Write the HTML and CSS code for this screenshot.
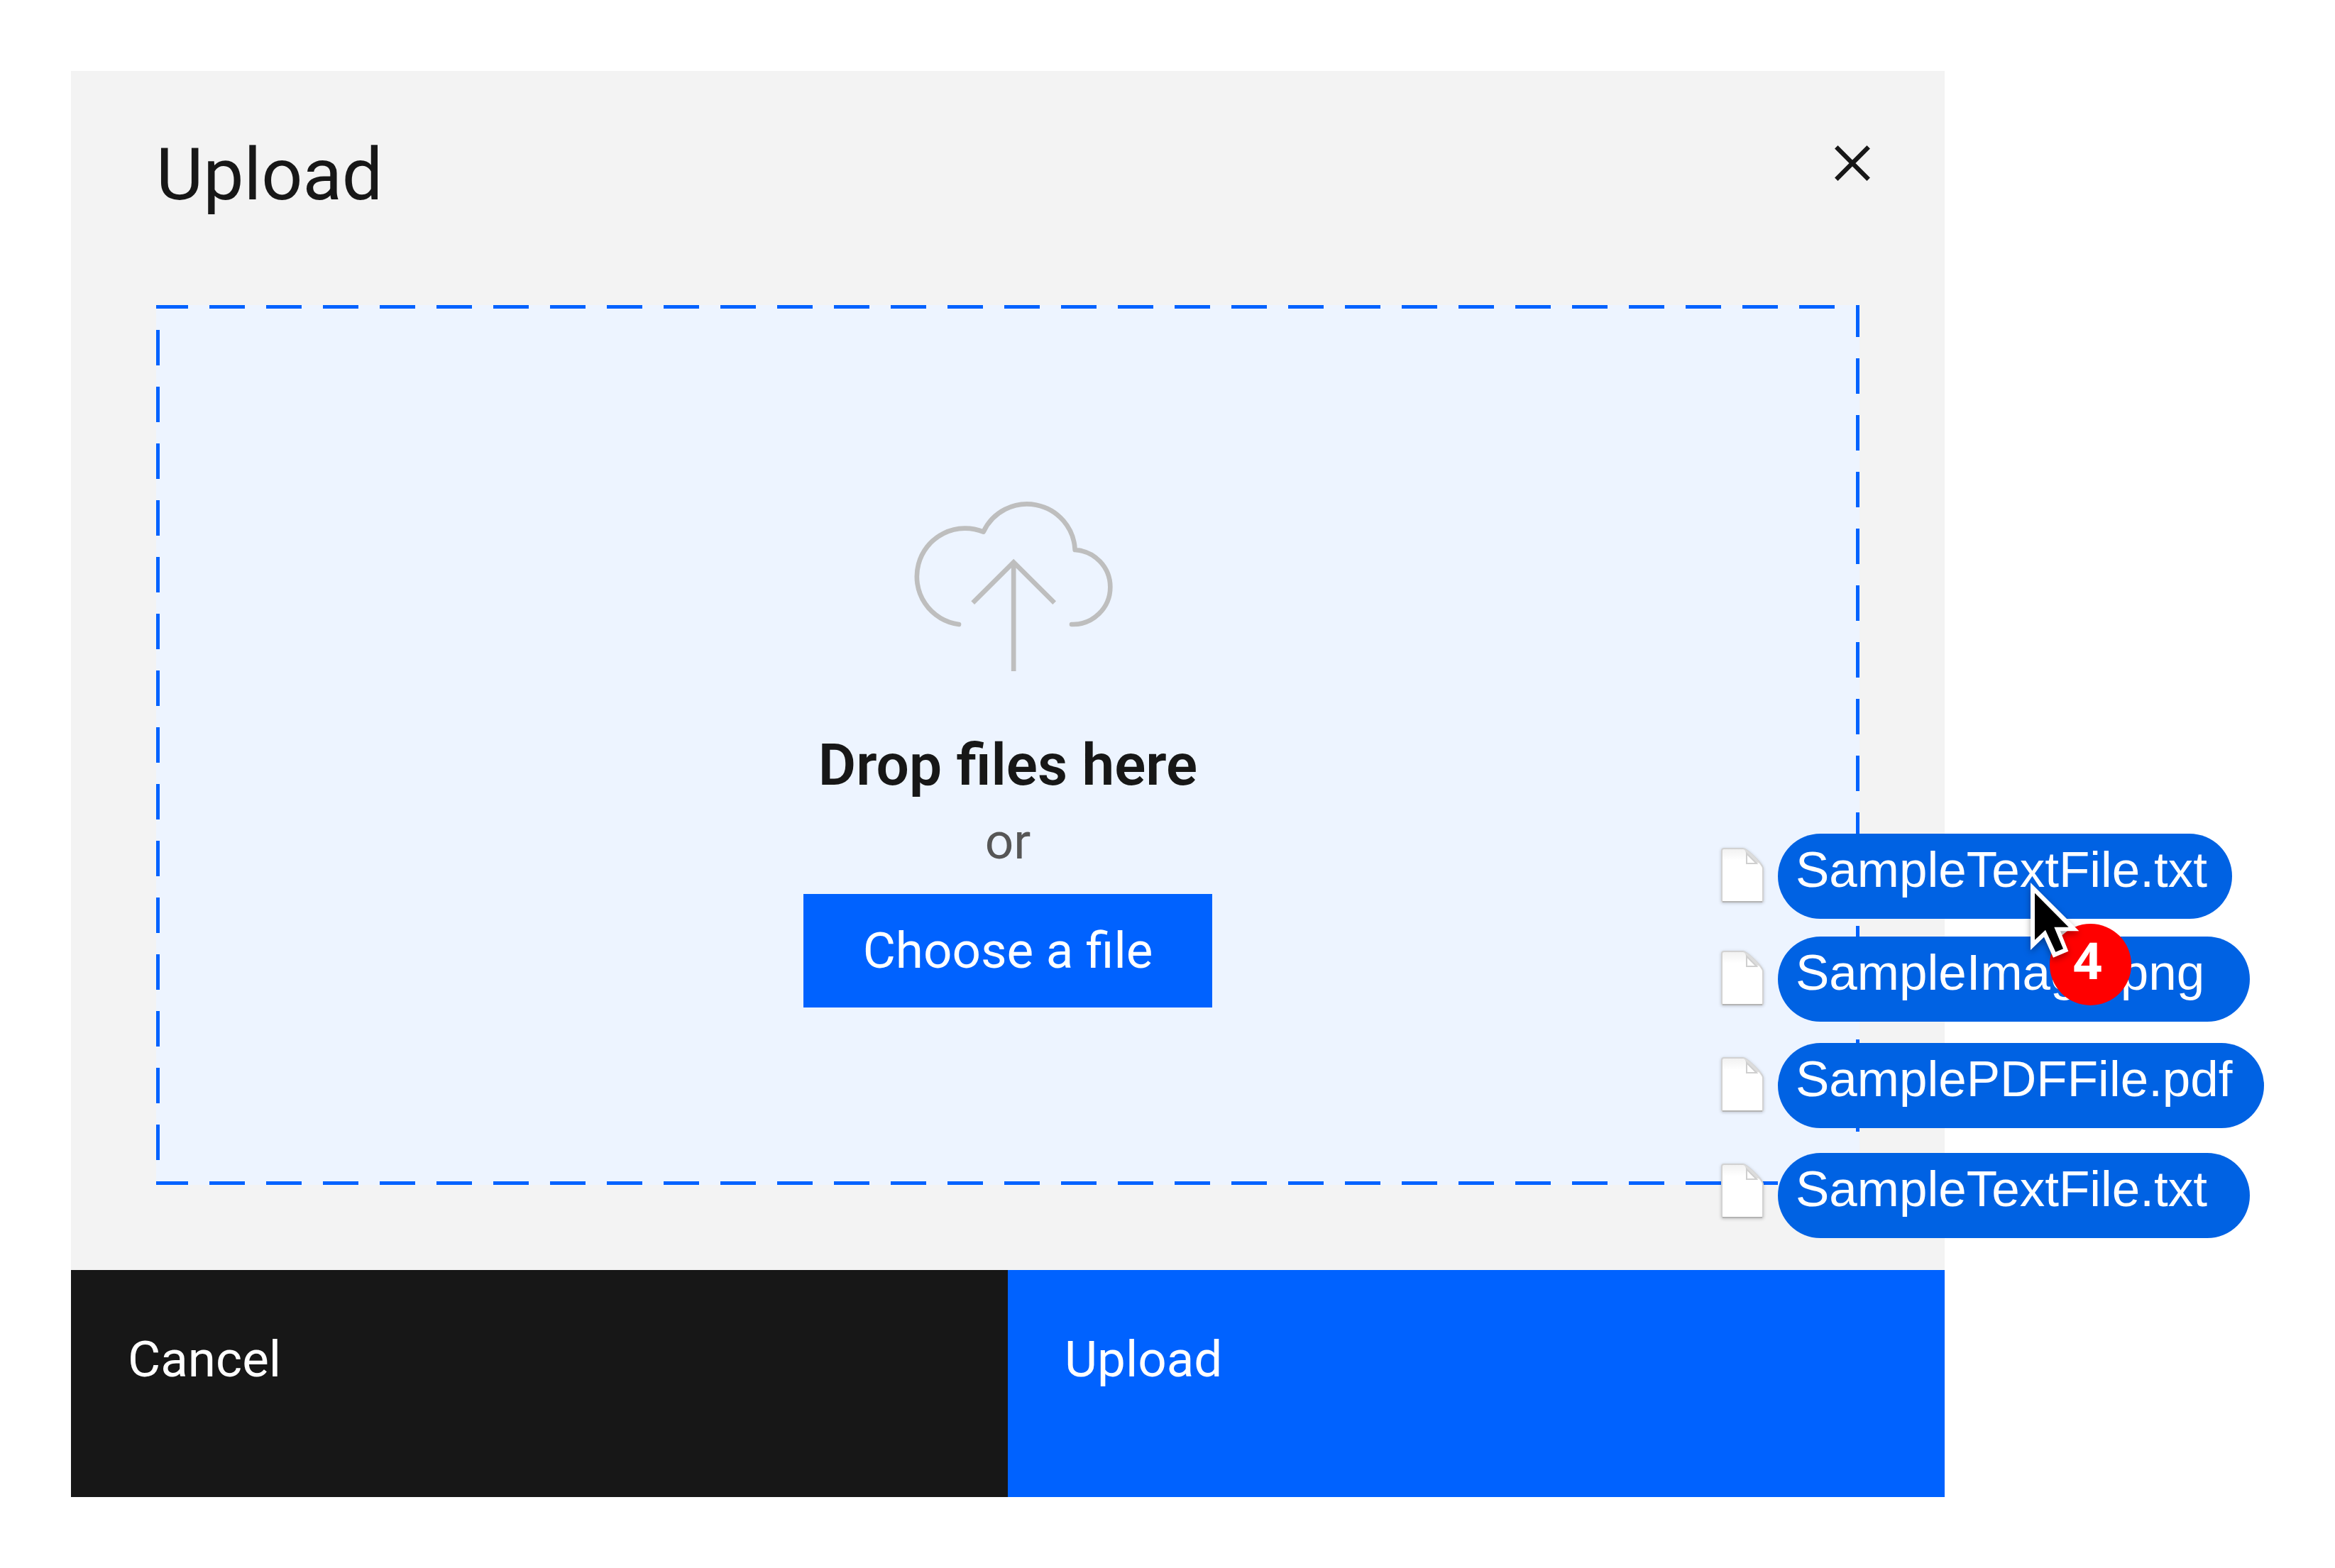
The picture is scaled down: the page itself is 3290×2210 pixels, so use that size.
FILE: index.html
```html
<!DOCTYPE html>
<html lang="en">
<head>
  <meta charset="utf-8">
  <meta name="viewport" content="width=device-width, initial-scale=1">
  <title>Upload</title>
  <link rel="stylesheet" href="styles.css">
</head>
<body>
  <svg class="sprite" aria-hidden="true">
    <defs>
      <linearGradient id="sheet-shade" x1="0" y1="0" x2="0" y2="1">
        <stop offset="0" stop-color="#f1f1f1"/>
        <stop offset="0.22" stop-color="#ffffff"/>
      </linearGradient>
      <symbol id="file" viewBox="0 0 70 90">
        <path d="M9 5H36C41 5 64 27 64 33V78Q64 80 62 80H8Q6 80 6 78V8Q6 5 9 5Z" fill="url(#sheet-shade)" stroke="#d2d2d2" stroke-width="2"/>
        <path d="M7 80H63" stroke="#b4b4b4" stroke-width="2"/>
        <path d="M36 5C40 8 41 12 41 25H57C61 26 63 29 64 33C63 25 42 5 36 5Z" fill="#dcdcdc"/>
        <path d="M41 12V26H55Z" fill="#ffffff" stroke="#cfcfcf" stroke-width="2"/>
      </symbol>
    </defs>
  </svg>

  <main class="stage">
    <section class="dialog" role="dialog" aria-labelledby="dialog-title">
      <header class="dialog-header">
        <h1 class="dialog-title" id="dialog-title">Upload</h1>
        <button class="close" type="button" aria-label="Close">
          <svg class="close-icon" viewBox="0 0 50 50" aria-hidden="true">
            <path d="M2.300 2.300L47.700 47.700M47.700 2.300L2.300 47.700" fill="none" stroke="currentColor" stroke-width="6.3"/>
          </svg>
        </button>
      </header>

      <div class="dropzone">
        <svg class="cloud" viewBox="88 72 906 735" aria-hidden="true">
          <g fill="none" stroke="currentColor" stroke-width="20">
            <path d="M334 600A204 204 0 1 1 438 209A203 203 0 0 1 825 285A158 158 0 0 1 974 442A158 158 0 0 1 811 600" stroke-linecap="round" stroke-linejoin="round"/>
            <path d="M393 509L565.500 337L738 509M565.500 337V798"/>
          </g>
        </svg>
        <h2 class="drop-title">Drop files here</h2>
        <p class="drop-or">or</p>
        <button class="choose" type="button">Choose a file</button>
      </div>

      <footer class="actions">
        <button class="action action-cancel" type="button">Cancel</button>
        <button class="action action-upload" type="button">Upload</button>
      </footer>
    </section>

    <div class="drag">
      <ul class="drag-list">
        <li class="drag-item">
          <svg class="file-icon" aria-hidden="true"><use href="#file"/></svg>
          <span class="pill pill-small">SampleTextFile.txt</span>
        </li>
        <li class="drag-item">
          <svg class="file-icon" aria-hidden="true"><use href="#file"/></svg>
          <span class="pill">SampleImage.png</span>
        </li>
        <li class="drag-item">
          <svg class="file-icon" aria-hidden="true"><use href="#file"/></svg>
          <span class="pill pill-large">SamplePDFFile.pdf</span>
        </li>
        <li class="drag-item">
          <svg class="file-icon" aria-hidden="true"><use href="#file"/></svg>
          <span class="pill">SampleTextFile.txt</span>
        </li>
      </ul>
      <span class="badge">4</span>
      <svg class="cursor" viewBox="183 283 210 321" aria-hidden="true">
        <path d="M183 283L388 488H309L343 573L279 600L240 513L183 568Z" fill="#ffffff"/>
        <path d="M201 327L344 471H283L321 563L289 576L246 483L201 525Z" fill="#000000"/>
      </svg>
    </div>
  </main>
</body>
</html>
```
FILE: styles.css
```css
:root {
  --blue: #0062ff;
  --ink: #171717;
  --ui: Roboto, "Noto Sans", sans-serif;
}

* {
  box-sizing: border-box;
}

body {
  margin: 0;
  background: #ffffff;
  color: var(--ink);
  font-family: var(--ui);
  font-size: 71px;
}

h1,
h2,
p,
ul {
  margin: 0;
  padding: 0;
}

button {
  border: 0;
  margin: 0;
  font: inherit;
  cursor: pointer;
}

.sprite {
  position: absolute;
  width: 0;
  height: 0;
}

.stage {
  position: relative;
  padding: 100px 550px 100px 100px;
}

.dialog {
  background: #f3f3f3;
}

/* Header */

.dialog-header {
  display: flex;
  justify-content: space-between;
  align-items: flex-start;
  padding: 86px 90px 124px 120px;
}

.dialog-title {
  font-size: 102px;
  font-weight: 400;
  line-height: 120px;
}

.close {
  display: grid;
  place-items: center;
  width: 80px;
  height: 88px;
  padding: 0;
  background: none;
  color: var(--ink);
}

.close-icon {
  width: 50px;
  height: 50px;
}

/* Drop area: one tiled dash strip on each side */

.dropzone {
  display: flex;
  flex-direction: column;
  align-items: center;
  margin: 0 120px;
  padding: 274px 80px 250px;
  background:
    linear-gradient(90deg, var(--blue) 50px, transparent 50px) -5px 0 / 80px 5px repeat-x,
    linear-gradient(90deg, var(--blue) 50px, transparent 50px) -5px 100% / 80px 5px repeat-x,
    linear-gradient(180deg, var(--blue) 50px, transparent 50px) 0 35px / 5px 80px repeat-y,
    linear-gradient(180deg, var(--blue) 50px, transparent 50px) 100% -5px / 5px 80px repeat-y,
    #edf4ff;
}

.cloud {
  width: 302px;
  height: 245px;
  color: #bebebe;
}

.drop-title {
  margin-top: 79px;
  font-size: 82px;
  font-weight: 600;
  line-height: 100px;
}

.drop-or {
  margin-top: 8px;
  color: #565656;
  line-height: 100px;
}

.choose {
  margin-top: 24px;
  padding: 0 84px;
  background: var(--blue);
  color: #ffffff;
  line-height: 160px;
}

/* Footer actions */

.actions {
  display: grid;
  grid-template-columns: 1fr 1fr;
  margin-top: 120px;
}

.action {
  display: flex;
  align-items: flex-start;
  height: 320px;
  padding: 86px 80px;
  color: #ffffff;
  line-height: 80px;
}

.action-cancel {
  background: var(--ink);
}

.action-upload {
  background: var(--blue);
}

/* Files being dragged over the dialog */

.drag {
  position: absolute;
  top: 1175px;
  right: 100px;
  width: 770px;
}

.drag-list {
  display: grid;
  grid-template-rows: 145px 150px 155px 120px;
  list-style: none;
}

.drag-item {
  display: flex;
  align-items: flex-start;
  gap: 15px;
}

.file-icon {
  width: 70px;
  height: 90px;
  margin-top: 16px;
  filter: drop-shadow(0 1px 2px rgba(0, 0, 0, 0.2));
}

.drag-item:last-child .file-icon {
  margin-top: 11px;
}

.pill {
  width: 665px;
  height: 120px;
  padding: 0 25px;
  border-radius: 60px;
  background: #0062e3;
  color: #ffffff;
  font-family: "Liberation Sans", Arial, sans-serif;
  line-height: 102px;
  white-space: nowrap;
}

.pill-small {
  width: 640px;
}

.pill-large {
  width: 685px;
}

.badge {
  position: absolute;
  top: 127px;
  left: 468px;
  width: 115px;
  height: 115px;
  padding-right: 8px;
  border-radius: 50%;
  background: #ff0000;
  color: #ffffff;
  font-family: "Noto Sans", sans-serif;
  font-weight: 700;
  line-height: 102px;
  text-align: center;
}

.cursor {
  position: absolute;
  top: 69px;
  left: 441px;
  width: 70px;
  height: 107px;
  filter: drop-shadow(0 4px 5px rgba(0, 0, 0, 0.35));
}
```
